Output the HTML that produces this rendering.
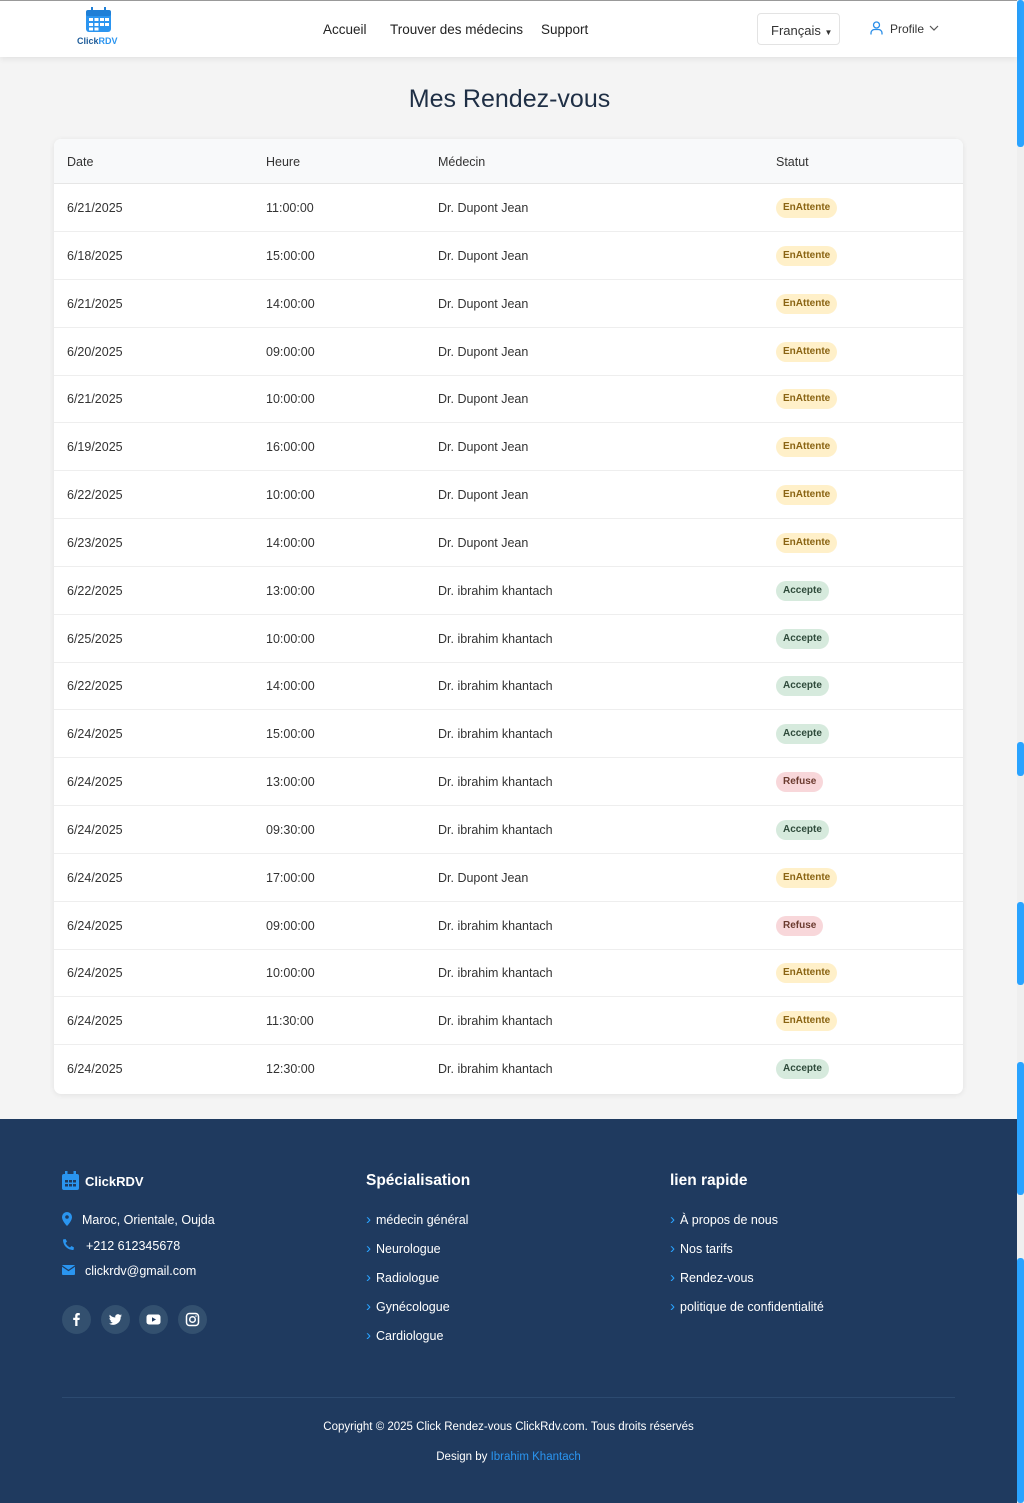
<!DOCTYPE html>
<html><head><meta charset="utf-8">
<style>
*{margin:0;padding:0;box-sizing:border-box}
body{width:1024px;height:1503px;background:#f4f4f4;font-family:"Liberation Sans",sans-serif;position:relative;overflow:hidden;color:#333}
.abs{position:absolute}
.nav{left:0;top:0;width:1017px;height:57px;background:#fff;border-top:1px solid #999;box-shadow:0 2px 6px rgba(0,0,0,.08)}
.navl{top:21px;font-size:13.5px;color:#222}
.card{left:54px;top:139px;width:909px;height:955px;background:#fff;border-radius:7px;box-shadow:0 1px 6px rgba(0,0,0,.08);overflow:hidden}
.th{position:absolute;left:0;top:0;width:100%;height:45px;background:#f8f9fa;border-bottom:1px solid #e6e6e6;font-size:12.5px;color:#333}
.th span,.row span{position:absolute;top:17px}
.th span{top:16px}
.row{position:absolute;left:0;width:100%;height:48px;border-bottom:1px solid #eee;font-size:12.5px;color:#333}
.b{position:absolute;left:722px;top:14px;height:20px;line-height:20px;border-radius:10px;padding:0 7px;font-size:10px;font-weight:bold;font-style:normal}
.W{background:#fff0c9;color:#8a6413}
.A{background:#d6eadd;color:#2e4a3a}
.R{background:#f8d7da;color:#6b3b2f}
.foot{left:0;top:1119px;width:1017px;height:384px;background:#1f3a5f;color:#fff}
.ft{font-size:12.5px;color:#fff}
.h{font-size:15.5px;font-weight:bold;color:#fff}
.chev{color:#2aa3ff;font-size:15px;margin-right:5px}
.soc{width:29px;height:29px;border-radius:50%;background:#33506f;top:1305px}
.soc svg{position:absolute;left:7px;top:7px}
.sb{left:1017px;width:7px;background:#2aa3ff;border-radius:3px}
</style></head><body>
<div class="abs" style="left:1017px;top:0;width:7px;height:1503px;background:#efefef"></div>
<div class="abs sb" style="top:0;height:147px"></div>
<div class="abs sb" style="top:742px;height:34px"></div>
<div class="abs sb" style="top:902px;height:83px"></div>
<div class="abs sb" style="top:1062px;height:133px"></div>
<div class="abs sb" style="top:1258px;height:245px"></div>

<div class="abs nav"></div>
<svg class="abs" style="left:85px;top:7px" width="27" height="26" viewBox="0 0 27 26"><rect x="1" y="3" width="25" height="22" rx="3" fill="#2b95f0"/><rect x="1" y="3" width="25" height="6" rx="2" fill="#1f7fd6"/><rect x="6" y="0" width="2" height="6" fill="#1f7fd6"/><rect x="19" y="0" width="2" height="6" fill="#1f7fd6"/><g fill="#fff"><rect x="4" y="11" width="4" height="3"/><rect x="9.5" y="11" width="4" height="3"/><rect x="15" y="11" width="4" height="3"/><rect x="20" y="11" width="4" height="3"/><rect x="4" y="16" width="4" height="3"/><rect x="9.5" y="16" width="4" height="3"/><rect x="15" y="16" width="4" height="3"/><rect x="20" y="16" width="4" height="3"/><rect x="4" y="20.5" width="4" height="3"/><rect x="9.5" y="20.5" width="4" height="3"/></g></svg>
<div class="abs" style="left:77px;top:36px;font-size:9px;font-weight:bold;color:#1e5c99">Click<span style="color:#2b95f0">RDV</span></div>
<div class="abs navl" style="left:323px;top:22px">Accueil</div>
<div class="abs navl" style="left:390px;top:22px">Trouver des médecins</div>
<div class="abs navl" style="left:541px;top:22px">Support</div>
<div class="abs" style="left:757px;top:13px;width:83px;height:32px;border:1px solid #e3e3e3;border-radius:4px;font-size:13px;color:#333;padding:9px 0 0 13px">Français <span style="font-size:8px">▼</span></div>
<svg class="abs" style="left:870px;top:21px" width="13" height="14" viewBox="0 0 13 14"><circle cx="6.5" cy="4" r="3" fill="none" stroke="#2a8ee8" stroke-width="1.3"/><path d="M1 13.5v-1.5a3.5 3.5 0 0 1 3.5-3.5h4a3.5 3.5 0 0 1 3.5 3.5v1.5" fill="none" stroke="#2a8ee8" stroke-width="1.3"/></svg>
<div class="abs" style="left:890px;top:22px;font-size:12px;color:#333">Profile</div>
<svg class="abs" style="left:929px;top:25px" width="10" height="7" viewBox="0 0 10 7"><path d="M1 1l4 4 4-4" fill="none" stroke="#555" stroke-width="1.2"/></svg>

<div class="abs" style="left:0;width:1017px;top:85px;text-align:center;font-size:25px;color:#1f2f45;padding-left:2px">Mes Rendez-vous</div>

<div class="abs card">
<div class="th"><span style="left:13px">Date</span><span style="left:212px">Heure</span><span style="left:384px">Médecin</span><span style="left:722px">Statut</span></div>
<div class="row" style="top:45px"><span style="left:13px">6/21/2025</span><span style="left:212px">11:00:00</span><span style="left:384px">Dr. Dupont Jean</span><i class="b W">EnAttente</i></div>
<div class="row" style="top:92.8px"><span style="left:13px">6/18/2025</span><span style="left:212px">15:00:00</span><span style="left:384px">Dr. Dupont Jean</span><i class="b W">EnAttente</i></div>
<div class="row" style="top:140.7px"><span style="left:13px">6/21/2025</span><span style="left:212px">14:00:00</span><span style="left:384px">Dr. Dupont Jean</span><i class="b W">EnAttente</i></div>
<div class="row" style="top:188.5px"><span style="left:13px">6/20/2025</span><span style="left:212px">09:00:00</span><span style="left:384px">Dr. Dupont Jean</span><i class="b W">EnAttente</i></div>
<div class="row" style="top:236.4px"><span style="left:13px">6/21/2025</span><span style="left:212px">10:00:00</span><span style="left:384px">Dr. Dupont Jean</span><i class="b W">EnAttente</i></div>
<div class="row" style="top:284.2px"><span style="left:13px">6/19/2025</span><span style="left:212px">16:00:00</span><span style="left:384px">Dr. Dupont Jean</span><i class="b W">EnAttente</i></div>
<div class="row" style="top:332px"><span style="left:13px">6/22/2025</span><span style="left:212px">10:00:00</span><span style="left:384px">Dr. Dupont Jean</span><i class="b W">EnAttente</i></div>
<div class="row" style="top:379.9px"><span style="left:13px">6/23/2025</span><span style="left:212px">14:00:00</span><span style="left:384px">Dr. Dupont Jean</span><i class="b W">EnAttente</i></div>
<div class="row" style="top:427.7px"><span style="left:13px">6/22/2025</span><span style="left:212px">13:00:00</span><span style="left:384px">Dr. ibrahim khantach</span><i class="b A">Accepte</i></div>
<div class="row" style="top:475.6px"><span style="left:13px">6/25/2025</span><span style="left:212px">10:00:00</span><span style="left:384px">Dr. ibrahim khantach</span><i class="b A">Accepte</i></div>
<div class="row" style="top:523.4px"><span style="left:13px">6/22/2025</span><span style="left:212px">14:00:00</span><span style="left:384px">Dr. ibrahim khantach</span><i class="b A">Accepte</i></div>
<div class="row" style="top:571.2px"><span style="left:13px">6/24/2025</span><span style="left:212px">15:00:00</span><span style="left:384px">Dr. ibrahim khantach</span><i class="b A">Accepte</i></div>
<div class="row" style="top:619.1px"><span style="left:13px">6/24/2025</span><span style="left:212px">13:00:00</span><span style="left:384px">Dr. ibrahim khantach</span><i class="b R">Refuse</i></div>
<div class="row" style="top:666.9px"><span style="left:13px">6/24/2025</span><span style="left:212px">09:30:00</span><span style="left:384px">Dr. ibrahim khantach</span><i class="b A">Accepte</i></div>
<div class="row" style="top:714.8px"><span style="left:13px">6/24/2025</span><span style="left:212px">17:00:00</span><span style="left:384px">Dr. Dupont Jean</span><i class="b W">EnAttente</i></div>
<div class="row" style="top:762.6px"><span style="left:13px">6/24/2025</span><span style="left:212px">09:00:00</span><span style="left:384px">Dr. ibrahim khantach</span><i class="b R">Refuse</i></div>
<div class="row" style="top:810.4px"><span style="left:13px">6/24/2025</span><span style="left:212px">10:00:00</span><span style="left:384px">Dr. ibrahim khantach</span><i class="b W">EnAttente</i></div>
<div class="row" style="top:858.3px"><span style="left:13px">6/24/2025</span><span style="left:212px">11:30:00</span><span style="left:384px">Dr. ibrahim khantach</span><i class="b W">EnAttente</i></div>
<div class="row" style="top:906.1px;border-bottom:none"><span style="left:13px">6/24/2025</span><span style="left:212px">12:30:00</span><span style="left:384px">Dr. ibrahim khantach</span><i class="b A">Accepte</i></div>
</div>

<div class="abs foot"></div>
<svg class="abs" style="left:62px;top:1171px" width="17" height="19" viewBox="0 0 17 19"><rect x="0" y="3" width="17" height="16" rx="2" fill="#2a95f0"/><rect x="3" y="0" width="2.5" height="5" fill="#2a95f0"/><rect x="11.5" y="0" width="2.5" height="5" fill="#2a95f0"/><g fill="#1f3a5f"><rect x="3" y="9" width="3" height="2.5"/><rect x="7" y="9" width="3" height="2.5"/><rect x="11" y="9" width="3" height="2.5"/><rect x="3" y="13" width="3" height="2.5"/><rect x="7" y="13" width="3" height="2.5"/><rect x="11" y="13" width="3" height="2.5"/></g></svg>
<div class="abs" style="left:85px;top:1174px;font-size:13px;font-weight:bold;color:#fff">ClickRDV</div>
<svg class="abs" style="left:62px;top:1212px" width="10" height="14" viewBox="0 0 10 14"><path d="M5 0a5 5 0 0 0-5 5c0 4 5 9 5 9s5-5 5-9a5 5 0 0 0-5-5z" fill="#2a95f0"/><circle cx="5" cy="5" r="1.8" fill="#1f3a5f"/></svg>
<div class="abs ft" style="left:82px;top:1213px">Maroc, Orientale, Oujda</div>
<svg class="abs" style="left:62px;top:1238px" width="13" height="13" viewBox="0 0 13 13"><path d="M12 9.5l-2.5-1.5-1.5 1.5c-2-1-3.5-2.5-4.5-4.5L5 3.5 3.5 1 1 1.5C1 7.5 5.5 12 11.5 12z" fill="#2a95f0"/></svg>
<div class="abs ft" style="left:86px;top:1239px">+212 612345678</div>
<svg class="abs" style="left:62px;top:1265px" width="13" height="10" viewBox="0 0 13 10"><rect width="13" height="10" rx="1" fill="#2a95f0"/><path d="M0 1l6.5 4.5L13 1" fill="none" stroke="#1f3a5f" stroke-width="1.2"/></svg>
<div class="abs ft" style="left:85px;top:1264px">clickrdv@gmail.com</div>
<div class="abs soc" style="left:62px"><svg width="15" height="15" viewBox="0 0 15 15"><path d="M8.5 14V8h2l.3-2.3H8.5V4.3c0-.7.2-1.1 1.1-1.1h1.2V1.1A15 15 0 0 0 9 1C7.3 1 6.2 2 6.2 3.9v1.8h-2V8h2v6z" fill="#fff"/></svg></div>
<div class="abs soc" style="left:101px"><svg width="15" height="15" viewBox="0 0 15 15"><path d="M14 3.5a5 5 0 0 1-1.6.4A2.7 2.7 0 0 0 13.6 2.4a5 5 0 0 1-1.7.6A2.7 2.7 0 0 0 7.3 5.5 7.6 7.6 0 0 1 1.8 2.7a2.7 2.7 0 0 0 .8 3.6 2.6 2.6 0 0 1-1.2-.3 2.7 2.7 0 0 0 2.1 2.6 2.7 2.7 0 0 1-1.2 0 2.7 2.7 0 0 0 2.5 1.9A5.4 5.4 0 0 1 1 11.6a7.6 7.6 0 0 0 11.7-6.8A5.4 5.4 0 0 0 14 3.5z" fill="#fff"/></svg></div>
<div class="abs soc" style="left:139px"><svg width="15" height="15" viewBox="0 0 15 15"><rect x="0.5" y="2.5" width="14" height="10" rx="2.5" fill="#fff"/><path d="M6 5.2v4.6L10 7.5z" fill="#1f3a5f"/></svg></div>
<div class="abs soc" style="left:178px"><svg width="15" height="15" viewBox="0 0 15 15"><rect x="1.5" y="1.5" width="12" height="12" rx="3" fill="none" stroke="#fff" stroke-width="1.5"/><circle cx="7.5" cy="7.5" r="2.8" fill="none" stroke="#fff" stroke-width="1.5"/><circle cx="11" cy="4" r=".8" fill="#fff"/></svg></div>

<div class="abs h" style="left:366px;top:1172px">Spécialisation</div>
<div class="abs ft" style="left:366px;top:1211px"><span class="chev">›</span>médecin général</div>
<div class="abs ft" style="left:366px;top:1240px"><span class="chev">›</span>Neurologue</div>
<div class="abs ft" style="left:366px;top:1269px"><span class="chev">›</span>Radiologue</div>
<div class="abs ft" style="left:366px;top:1298px"><span class="chev">›</span>Gynécologue</div>
<div class="abs ft" style="left:366px;top:1327px"><span class="chev">›</span>Cardiologue</div>

<div class="abs h" style="left:670px;top:1172px">lien rapide</div>
<div class="abs ft" style="left:670px;top:1211px"><span class="chev">›</span>À propos de nous</div>
<div class="abs ft" style="left:670px;top:1240px"><span class="chev">›</span>Nos tarifs</div>
<div class="abs ft" style="left:670px;top:1269px"><span class="chev">›</span>Rendez-vous</div>
<div class="abs ft" style="left:670px;top:1298px"><span class="chev">›</span>politique de confidentialité</div>

<div class="abs" style="left:62px;top:1397px;width:893px;height:1px;background:#2c4a70"></div>
<div class="abs" style="left:0;width:1017px;top:1421px;text-align:center;font-size:11.5px;color:#fff">Copyright © 2025 Click Rendez-vous ClickRdv.com. Tous droits réservés</div>
<div class="abs" style="left:0;width:1017px;top:1451px;text-align:center;font-size:11.5px;color:#fff">Design by <span style="color:#2a95f0">Ibrahim Khantach</span></div>
</body></html>
